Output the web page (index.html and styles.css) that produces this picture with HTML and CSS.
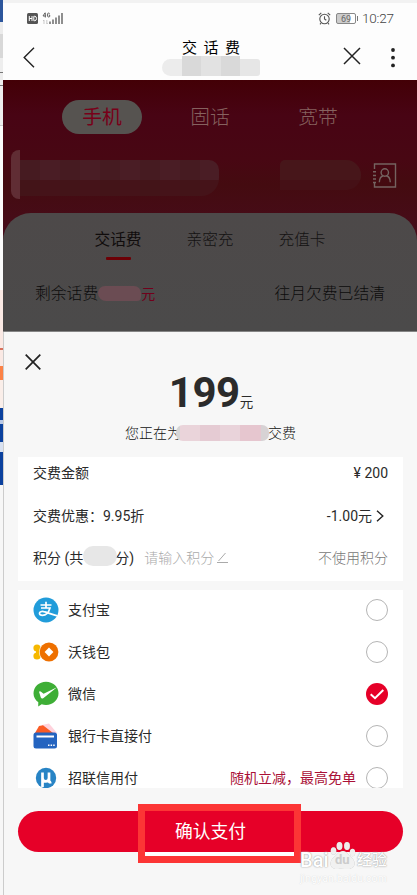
FILE: index.html
```
<!DOCTYPE html>
<html lang="zh-CN">
<head>
<meta charset="utf-8">
<title>交话费</title>
<link rel="stylesheet" href="styles.css">
</head>
<body>
<div class="screen">
  <aside class="edge">
    <i class="e-blue"></i><i class="e-gray"></i><i class="e-mark"></i><i class="e-gray2"></i><i class="e-white"></i><i class="e-peach"></i><i class="e-orange"></i><i class="e-peach2"></i><i class="e-navy"></i><i class="e-rest"></i>
  </aside>
  <main class="phone">
    <header class="status">
      <svg class="signals" width="37" height="14" viewBox="0 0 37 14">
        <rect x="0" y="1" width="11" height="11" rx="1.5" fill="#555"/>
        <path d="M2.3 4v5M5 4v5M2.3 6.5H5M6.8 4.3v4.400h1q1.700 0 1.700-2.200T7.800 4.300z" fill="none" stroke="#fff"/>
        <path d="M18 .8 16 4h3M18.3.8v4.700M22.700 1.500q-2.300-1.400-2.300 1.500t2.300 1.600V3h-1" fill="none" stroke="#555" stroke-width=".9"/>
        <path d="M17 8v4M19.800 8v4M16 9l1-1M20.800 11l-1 1" stroke="#bbb" fill="none" stroke-width=".8"/>
        <path d="M23 9.500V12M26 7.500V12M29 5.500V12M32 3.500V12M35 1V12" stroke="#555" stroke-width="1.300" fill="none"/>
      </svg>
      <div class="status-right">
        <svg width="13" height="13" viewBox="0 0 13 13" fill="none" stroke="#555" stroke-width="1.100"><circle cx="6.500" cy="7" r="4.700"/><path d="M6.500 4.300V7l1.800 1.300M.8 3.200 3.300.9M12.200 3.200 9.700.9M3 11l-1 1.300M10 11l1 1.300"/></svg>
        <span class="battery"><span>69</span></span>
        <time>10:27</time>
      </div>
    </header>
    <nav class="nav">
      <svg class="back" width="12" height="21" viewBox="0 0 12 21" fill="none" stroke="#222" stroke-width="1.400"><path d="M11 .8 1.200 10.400 11 20.200"/></svg>
      <div class="title"><h1>交话费</h1><div class="blur"><i></i><i></i><i></i><i></i><i></i></div></div>
      <svg class="nav-close" width="18" height="18" viewBox="0 0 18 18" stroke="#222" stroke-width="1.500"><path d="M1 1l16 16M17 1 1 17"/></svg>
      <svg class="dots" width="4" height="20" viewBox="0 0 4 20" fill="#222"><circle cx="2" cy="2" r="1.900"/><circle cx="2" cy="9.700" r="1.900"/><circle cx="2" cy="17.400" r="1.900"/></svg>
    </nav>
    <section class="dimmed">
      <div class="kinds"><span class="on">手机</span><span>固话</span><span>宽带</span></div>
      <div class="account">
        <div class="number"><i></i><i></i><i></i><i></i><i></i><i></i><i></i><i></i><i></i><i></i><i></i></div>
        <div class="place"></div>
        <svg width="25" height="25" viewBox="0 0 25 25" fill="none" stroke="#746360" stroke-width="1.400"><path d="M2.500 6V1h21v23h-21v-5M1 8.700h3M1 12.500h3M1 16h3M1 19.500h3"/><circle cx="12.800" cy="9.500" r="3.700"/><path d="M7.300 19.200c.2-3.600 2-6 4-6.500M14.300 12.700c2.300.6 3.900 3 4 6.500"/></svg>
      </div>
      <div class="panel">
        <div class="tabs"><span class="on">交话费</span><span>亲密充</span><span>充值卡</span></div>
        <div class="balance"><span>剩余话费</span><i></i><b>元</b><span class="clear">往月欠费已结清</span></div>
      </div>
    </section>
    <section class="sheet">
      <svg class="close" width="16" height="16" viewBox="0 0 16 16" stroke="#222" stroke-width="1.700"><path d="M.7.7l14.600 14.600M15.300.7.7 15.300"/></svg>
      <div class="amount"><strong>199</strong><span>元</span></div>
      <div class="payee"><span>您正在为</span><i></i><span>交费</span></div>
      <div class="card bill">
        <div class="row"><span>交费金额</span><span>¥ 200</span></div>
        <div class="row"><span>交费优惠：9.95折</span><span class="discount">-1.00元<svg width="8" height="12" viewBox="0 0 8 12" fill="none" stroke="#222" stroke-width="1.400"><path d="M1 .7 6.800 6 1 11.300"/></svg></span></div>
        <div class="row points"><span>积分 (共</span><i></i><span>分)</span><span class="hint">请输入积分</span><svg width="13" height="12" viewBox="0 0 13 12" fill="none" stroke="#aaa"><path d="M1 10.500h11M2.500 9 9.500 1"/></svg><span class="unused">不使用积分</span></div>
      </div>
      <div class="card methods">
        <div class="method"><svg width="26" height="26" viewBox="0 0 26 26"><circle cx="13" cy="13" r="12.500" fill="#219cda"/><path d="M7.500 8h11M13 4.800V11M8 11h9c-1.200 4-4 7.300-7.500 7.300-2 0-3.100-.9-3-2.100.2-1.400 2-2.100 4.200-1.600 3.700.7 8.500 3.200 13.800 4.200" fill="none" stroke="#fff" stroke-width="1.700"/></svg><span>支付宝</span><i class="radio"></i></div>
        <div class="method"><svg width="26" height="26" viewBox="0 0 26 26"><circle cx="4" cy="9" r="3.600" fill="#f6b800"/><circle cx="4" cy="17" r="3.600" fill="#f6b800"/><path d="M3 9h4v8H3z" fill="#f6b800"/><circle cx="16" cy="13" r="10" fill="#fff"/><circle cx="16" cy="13" r="9.400" fill="#ee7000"/><path d="M16 8.600 20.400 13 16 17.400 11.600 13z" fill="#fff"/></svg><span>沃钱包</span><i class="radio"></i></div>
        <div class="method"><svg width="26" height="26" viewBox="0 0 26 26"><path d="M13 .7c7 0 12.500 5 12.500 11.600S20 24 13 24c-1.600 0-3-.2-4.300-.7L5.200 25.500l.1-4.200C2.300 19.200.5 16 .5 12.300.5 5.700 6 .7 13 .7z" fill="#3eae36"/><path d="M6 10.700q1-.8 2 0l2.600 2L24 6.300 10.200 17.200q-1.600 1-2.400-.7z" fill="#fff"/></svg><span>微信</span><i class="radio checked"><svg width="22" height="22" viewBox="0 0 22 22" fill="none" stroke="#fff" stroke-width="2"><path d="M4.700 11.200 9 15.200 17.300 7"/></svg></i></div>
        <div class="method"><svg width="26" height="26" viewBox="0 0 26 26"><path d="M9 2l7-1.500L24 10H10z" fill="#ffd2dc"/><path d="M6 3l4-.7L20 10H2z" fill="#fa5b25"/><rect x=".5" y="9.500" width="23.500" height="16" rx="2.500" fill="#2464c0"/><path d="M3.500 13.500h17.500" stroke="#fff" stroke-width="2"/><path d="M15 22.300h7" stroke="#fff" stroke-width="1.500" stroke-dasharray="1.500 1.100"/></svg><span>银行卡直接付</span><i class="radio"></i></div>
        <div class="method"><svg width="26" height="26" viewBox="0 0 26 26"><circle cx="13" cy="13" r="10.200" fill="#2884c5"/><path d="M9.500 7.500v14.500M9.500 13c0 4.500 6.500 4.500 6.500 0V7.500v8.500q0 1.800 2.300 1" fill="none" stroke="#fff" stroke-width="2.700"/></svg><span>招联信用付</span><em>随机立减，最高免单</em><i class="radio"></i></div>
      </div>
      <button class="pay">确认支付</button>
      <div class="marker"></div>
      <div class="watermark">
        <div class="brand"><span>Bai</span><svg width="26" height="29" viewBox="0 0 26 29" fill="#fff" fill-opacity=".85"><ellipse cx="3.500" cy="10" rx="2.800" ry="3.800"/><ellipse cx="9.500" cy="5" rx="2.900" ry="4"/><ellipse cx="17" cy="5" rx="2.900" ry="4"/><ellipse cx="22.500" cy="11.500" rx="2.700" ry="3.700"/><path d="M13 10c4 0 5 4 8 6 6 5 4 12-3 12-3 0-7-.6-10 0-8 1-10-7-4-12 3-2 5-6 9-6z"/></svg><b>du</b><span class="jy">经验</span></div>
        <div class="url">jingyan.baidu.com</div>
      </div>
    </section>
  </main>
</div>
</body>
</html>
```
FILE: styles.css
```
* { box-sizing: border-box; }
body { margin: 0; font-family: Roboto, "Noto Sans CJK SC", sans-serif; font-weight: 400; color: #2a2a2a; background: #fff; }
h1 { margin: 0; font-weight: 400; }
i, em { font-style: normal; }
svg { display: block; flex: none; }
.screen { display: flex; width: 417px; height: 895px; overflow: hidden; }
.edge { width: 3px; display: flex; flex-direction: column; background: #f7f7f7; }
.edge i { flex: none; }
.e-blue { height: 22px; background: #2c569c; }
.e-gray { height: 12px; background: #ececec; }
.e-mark { height: 24px; background: #d8d8d8; }
.e-gray2 { height: 67px; background: linear-gradient(#eee 14px, #777 14px, #777 15px, #eee 15px, #eee 27px, #777 27px, #777 28px, #eee 28px); }
.e-white { height: 165px; background: #fbfbfb; border-top: 1px solid #ccc; }
.e-peach { height: 76px; background: linear-gradient(#fae9e4 58px, #d9715c 58px, #d9715c 60px, #fae9e4 60px); }
.e-orange { height: 14px; background: #fc8246; }
.e-peach2 { height: 28px; background: #faeee9; }
.e-navy { height: 77px; background: linear-gradient(#0b419e 12px, #b9c9e6 12px, #b9c9e6 16px, #0b419e 16px, #0b419e 34px, #d8e1f1 34px, #d8e1f1 44px, #0b419e 44px); }
.e-rest { height: 410px; background: #f7f7f7; }
.phone { width: 414px; display: flex; flex-direction: column; background: #fdfdfd; border-top: 3px solid #f2f2f2; }
.status { height: 30px; display: flex; justify-content: space-between; padding: 9px 22px 0 24px; }
.status-right { display: flex; height: 13px; align-items: center; color: #666; }
.battery { display: flex; justify-content: center; align-items: center; width: 20px; height: 11px; margin: 0 6px 0 5px; border: 1px solid #888; border-radius: 2px; background: linear-gradient(90deg, #ccc 70%, #fff 70%); font-size: 9px; position: relative; }
.battery::after { content: ""; position: absolute; right: -3px; top: 2px; width: 1.500px; height: 5px; background: #777; }
time { font-size: 13.500px; line-height: 13px; font-weight: 300; color: #444; width: 33px; letter-spacing: -.2px; }
.nav { height: 47px; display: flex; align-items: flex-start; padding-left: 20px; }
.back { margin-top: 14px; }
.title { width: 98px; margin: 2px 0 0 127px; display: flex; flex-direction: column; }
.title h1 { height: 21px; margin-left: 20px; font-size: 15px; line-height: 27px; letter-spacing: 6.500px; white-space: nowrap; color: #000; position: relative; z-index: 1; }
.blur { display: flex; height: 20px; }
.blur i { flex: 1; background: #ececec; margin-top: 3px; }
.blur i:first-child { border-radius: 9px 0 0 9px; }
.blur i:nth-child(2), .blur i:nth-child(4) { background: #d9d9d9; margin-top: 0; }
.blur i:nth-child(3) { background: #e2e2e2; margin-top: 0; }
.blur i:last-child { border-radius: 0 3px 3px 0; background: #e6e6e6; }
.nav-close { margin: 14px 0 0 83px; }
.dots { margin: 15px 0 0 30px; }
.dimmed { height: 252px; background: linear-gradient(#430006, #480414 35px, #480713 80px, #440b10 105px, #470c1a 150px); }
.kinds { display: grid; grid-template-columns: repeat(3, 108px); justify-items: center; padding: 20px 0 0 45px; height: 70px; }
.kinds span { width: 80px; height: 34px; border-radius: 17px; font-size: 19.800px; line-height: 36px; text-align: center; font-weight: 300; color: #86625f; }
.kinds .on { background: #565350; color: #780019; font-weight: 400; }
.account { display: flex; height: 63px; padding-left: 8px; }
.number { width: 208px; height: 49px; display: flex; align-items: flex-start; }
.number i { width: 20px; height: 36px; margin-top: 10px; background: linear-gradient(#4a1d25 20px, #451319 20px); }
.number i:nth-child(even) { background: linear-gradient(#461b21 20px, #431418 20px); }
.number i:first-child { width: 9px; height: 49px; margin-top: 0; border-radius: 8px 0 0 8px; background: #602d34; }
.number i:last-child { width: 19px; border-radius: 0 10px 18px 0; }
.place { width: 81px; height: 30px; margin: 10px 0 0 61px; border-radius: 6px 18px 18px 0; background: linear-gradient(#47161a 20px, #451016 20px); }
.account svg { margin: 13px 0 0 11px; }
.panel { height: 119px; border-radius: 28px 28px 0 0; background: linear-gradient(#4d4949, #4b4a4a); border-bottom: 1px solid #858585; }
.tabs { display: grid; grid-template-columns: repeat(3, 92px); padding: 13px 0 0 69px; height: 57px; font-size: 15.700px; line-height: 27px; font-weight: 300; text-align: center; color: #141212; }
.tabs .on { color: #100c0c; font-weight: 400; }
.tabs .on::after { content: ""; display: block; width: 25px; height: 3px; margin: 4px auto 0; border-radius: 1px; background: #6c0006; }
.balance { display: flex; height: 48px; align-items: center; padding: 0 32px 0 32px; font-size: 15.800px; line-height: 22px; padding-bottom: 1px; font-weight: 300; color: #0c0c0c; }
.balance i { width: 43px; height: 15px; border-radius: 7px 7px 4px 8px; background: #6b4c53; }
.balance b { font-weight: 400; font-size: 14px; color: #71001b; }
.clear { margin-left: auto; }
.sheet { position: relative; height: 563px; flex: none; background: #f7f7f7; border-left: 1px solid #ccc; padding: 22px 14px 0; }
.close { margin-left: 7px; }
.amount { display: flex; justify-content: center; align-items: baseline; height: 51px; color: #2b2b2b; margin-left: 1px; }
.amount strong { font-size: 42px; line-height: 46px; letter-spacing: -.5px; }
.amount span { font-size: 13.500px; }
.payee { display: flex; justify-content: center; align-items: center; height: 24px; font-size: 14px; line-height: 20px; padding-bottom: 1px; color: #111; font-weight: 300; }
.payee i { width: 93px; height: 16px; margin: 0 -1px 0 -5px; border-radius: 7px; background: linear-gradient(90deg, #d6d6d6 4px, #ead4da 4px, #ead4da 24px, #e5cbd3 24px, #e5cbd3 44px, #e9d3da 44px, #e9d3da 64px, #e6c6cf 64px, #e6c6cf 85px, #d7d2d4 85px); position: relative; }
.card { background: #fff; }
.bill { height: 124px; margin-top: 12px; padding: 0 15px; display: flex; flex-direction: column; }
.row { height: 43px; flex: none; display: flex; justify-content: space-between; align-items: center; font-size: 14px; font-weight: 400; line-height: 20px; }
.row:first-child { margin-top: -6px; }
.row span { white-space: pre; }
.discount { display: flex; align-items: center; gap: 4px; padding-right: 4px; }
.points { justify-content: flex-start; height: 42px; }
.points i { width: 34px; height: 20px; margin: -4px -2px 0 0; border-radius: 10px; background: #e7e7e7; position: relative; }
.points .hint { margin-left: 10px; color: #aaa; font-weight: 300; }
.points svg { margin-left: 2px; }
.points .unused { margin-left: auto; color: #777; font-weight: 300; }
.methods { height: 198px; margin-top: 9px; padding-left: 15px; overflow: hidden; }
.method { height: 41.800px; display: flex; align-items: center; padding-right: 15px; font-size: 14px; line-height: 20px; }
.method:first-child { margin-top: -.5px; }
.method span { margin-left: 9px; }
.method em { margin-left: auto; margin-right: 10px; color: #aa1037; }
.radio { flex: none; width: 22px; height: 22px; margin-left: auto; border: 1px solid #b5b5b5; border-radius: 50%; background: #fff; }
.method em + .radio { margin-left: 0; }
.radio.checked { border: 0; background: #e60028; }
.pay { display: block; width: 385px; height: 41px; margin: 23px 0 0; padding: 0; border: 0; border-radius: 21px; background: #e60028; color: #fff; font: 400 17.800px/41px Roboto, "Noto Sans CJK SC", sans-serif; text-align: center; }
.marker { position: absolute; left: 134px; top: 472px; width: 163px; height: 59px; border: 7px solid #fc3535; }
.marker::after { content: ""; position: absolute; left: 0; right: 0; bottom: 0; height: 4px; background: #fff; }
.watermark { position: absolute; left: 296px; top: 508px; width: 92px; color: #fff; text-shadow: 0 0 1px #999, 0 0 2px #bbb; }
.brand { display: flex; align-items: flex-end; height: 30px; font-size: 20px; line-height: 20px; font-weight: 500; position: relative; }
.brand span { width: 30px; }
.brand .jy { width: 34px; margin-left: 1px; font-size: 15px; }
.brand svg { filter: drop-shadow(0 0 .500px #999); }
.brand b { position: absolute; left: 35px; bottom: 0; font-size: 13px; color: #ccc; text-shadow: none; }
.url { font-size: 10.500px; line-height: 15px; letter-spacing: .1px; margin-top: 1px; text-shadow: 0 0 1px #ccc; }
```
